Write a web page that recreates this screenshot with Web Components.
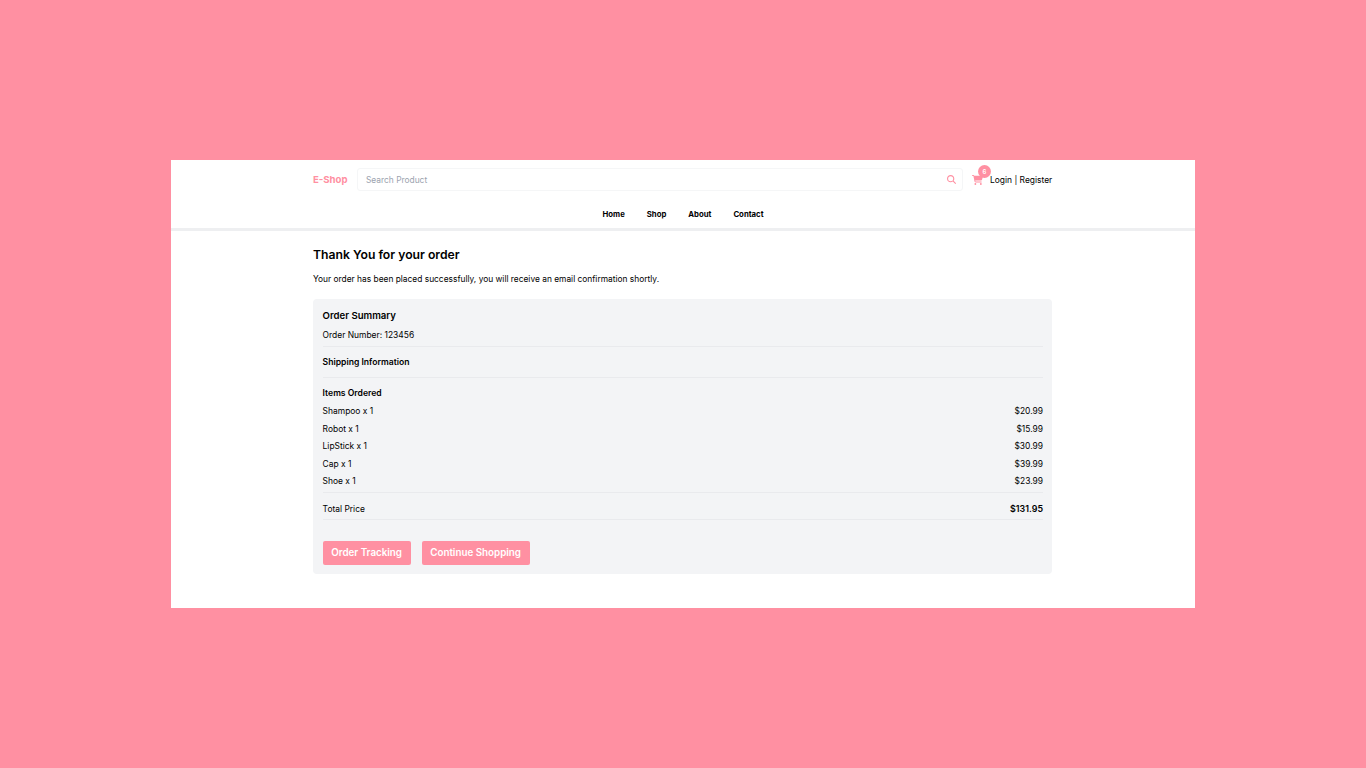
<!DOCTYPE html>
<html lang="en">
<head>
<meta charset="utf-8">
<title>E-Shop</title>
<style>
  html, body { margin: 0; height: 100%; }
  body {
    background: #ff90a2;
    font-family: Inter, "Liberation Sans", sans-serif;
    color: #000;
    display: flex;
    align-items: center;
    justify-content: center;
    height: 768px;
    overflow: hidden;
  }
</style>
</head>
<body>
<shop-page>
  <shop-header slot="header"></shop-header>
  <order-confirmation>
    <order-line label="Shampoo x 1" price="$20.99"></order-line>
    <order-line label="Robot x 1" price="$15.99"></order-line>
    <order-line label="LipStick x 1" price="$30.99"></order-line>
    <order-line label="Cap x 1" price="$39.99"></order-line>
    <order-line label="Shoe x 1" price="$23.99"></order-line>
  </order-confirmation>
</shop-page>

<script>
// white frame in the middle of the pink page
class ShopPage extends HTMLElement {
  constructor() {
    super();
    this.attachShadow({ mode: 'open' });
    this.shadowRoot.innerHTML = `
      <style>
        :host { display: block; width: 1024px; height: 448px; background: #fff; }
      </style>
      <slot name="header"></slot>
      <slot></slot>
    `;
  }
}

// logo, search, cart and the nav links
class ShopHeader extends HTMLElement {
  constructor() {
    super();
    this.attachShadow({ mode: 'open' });
    this.shadowRoot.innerHTML = `
      <style>
        :host { display: block; height: 68px; border-bottom: 3px solid #eeeff1; font-size: 8.45px; }
        .top {
          display: flex; align-items: center; height: 23px;
          margin: 0 143px 0 142px; padding-top: 8px;
        }
        .logo { font-size: 9.6px; font-weight: 700; color: #ff90a2; width: 44px; flex: none; }
        .search {
          flex: none; width: 606px; height: 23px; box-sizing: border-box;
          display: flex; align-items: center; justify-content: space-between;
          border: 1px solid #f5f6f7; border-radius: 3px; padding: 0 6px 0 8px;
          color: #9ca3af; font-size: 8.4px;
        }
        .search svg { display: block; }
        .cart { position: relative; flex: none; width: 27px; height: 23px; display: flex; align-items: center; padding-left: 9px; box-sizing: border-box; }
        .badge {
          position: absolute; left: 15px; top: -3.5px;
          width: 13px; height: 13px; border-radius: 50%;
          background: #ff90a2; color: #fff; font-size: 6px; font-weight: 600;
          display: flex; align-items: center; justify-content: center;
        }
        .account { white-space: nowrap; margin-left: auto; }
        nav {
          display: flex; justify-content: center; gap: 22px;
          margin-top: 15px; font-size: 7.75px; font-weight: 700; line-height: 16px;
        }
      </style>
      <div class="top">
        <div class="logo">E-Shop</div>
        <div class="search">
          <span>Search Product</span>
          <svg width="9" height="9" viewBox="0 0 512 512" fill="#ff90a2"><path d="M416 208c0 45.900-14.900 88.300-40 122.700L502.600 457.400c12.500 12.500 12.500 32.800 0 45.300s-32.800 12.500-45.300 0L330.700 376c-34.400 25.200-76.800 40-122.700 40C93.100 416 0 322.900 0 208S93.100 0 208 0S416 93.100 416 208zM208 352a144 144 0 1 0 0-288 144 144 0 1 0 0 288z"/></svg>
        </div>
        <div class="cart">
          <svg width="11" height="10" viewBox="0 0 576 512" fill="#ff90a2"><path d="M0 24C0 10.700 10.700 0 24 0H69.500c22 0 41.500 12.800 50.600 32h411c26.300 0 45.500 25 38.600 50.400l-41 152.300c-8.500 31.400-37 53.300-69.500 53.300H170.700l5.400 28.500c2.200 11.300 12.100 19.500 23.600 19.500H488c13.300 0 24 10.700 24 24s-10.700 24-24 24H199.700c-34.600 0-64.300-24.600-70.700-58.500L77.400 54.500c-.7-3.800-4-6.500-7.900-6.500H24C10.700 48 0 37.300 0 24zM128 464a48 48 0 1 1 96 0 48 48 0 1 1-96 0zm336-48a48 48 0 1 1 0 96 48 48 0 1 1 0-96z"/></svg>
          <span class="badge">6</span>
        </div>
        <div class="account">Login | Register</div>
      </div>
      <nav>
        <span>Home</span><span>Shop</span><span>About</span><span>Contact</span>
      </nav>
    `;
  }
}

// one row of the items list
class OrderLine extends HTMLElement {
  constructor() {
    super();
    this.attachShadow({ mode: 'open' });
  }

  connectedCallback() {
    const label = this.getAttribute('label') || '';
    const price = this.getAttribute('price') || '';
    this.shadowRoot.innerHTML = `
      <style>
        :host { display: flex; justify-content: space-between; height: 17.6px; line-height: 17.6px; font-size: 8.45px; }
      </style>
      <span>${label}</span><span>${price}</span>
    `;
  }
}

// heading, summary card and the two buttons
class OrderConfirmation extends HTMLElement {
  constructor() {
    super();
    this.attachShadow({ mode: 'open' });
    this.shadowRoot.innerHTML = `
      <style>
        :host { display: block; margin: 0 143px 0 142px; padding-top: 15px; font-size: 8.4px; }
        h1 { margin: 0; font-size: 12.2px; font-weight: 600; line-height: 18px; }
        p { margin: 8px 0 0; line-height: 14px; }
        .card {
          margin-top: 13px; height: 275px; box-sizing: border-box;
          background: #f3f4f6; border-radius: 4px; padding: 9px 9px 9px 9.6px;
        }
        h2 { margin: 0; font-size: 9.6px; font-weight: 600; line-height: 15px; }
        h3 { margin: 0; font-size: 8.6px; font-weight: 600; line-height: 14px; }
        .number { margin-top: 5px; line-height: 14px; font-size: 8.45px; }
        hr { border: 0; border-top: 1px solid #e9eaed; margin: 0; }
        .ship { margin-top: 8px; }
        .items { margin-top: 8px; margin-bottom: 3px; }
        .total { display: flex; justify-content: space-between; align-items: center; line-height: 14px; margin: 9px 0 3.5px; font-size: 8.45px; }
        .total b { font-weight: 600; font-size: 8.9px; }
        .actions { display: flex; gap: 11px; margin-top: 20.5px; }
        .btn {
          height: 24px; display: flex; align-items: center; justify-content: center;
          background: #ff90a2; color: #fff; border-radius: 2px;
          font-size: 9.8px; font-weight: 600;
        }
      </style>
      <h1>Thank You for your order</h1>
      <p>Your order has been placed successfully, you will receive an email confirmation shortly.</p>
      <div class="card">
        <h2>Order Summary</h2>
        <div class="number">Order Number: 123456</div>
        <hr style="margin-top:4px">
        <h3 class="ship">Shipping Information</h3>
        <hr style="margin-top:8px">
        <h3 class="items">Items Ordered</h3>
        <slot></slot>
        <hr style="margin-top:1px">
        <div class="total"><span>Total Price</span><b>$131.95</b></div>
        <hr>
        <div class="actions">
          <div class="btn" style="width:88px">Order Tracking</div>
          <div class="btn" style="width:108px">Continue Shopping</div>
        </div>
      </div>
    `;
  }
}

customElements.define('shop-page', ShopPage);
customElements.define('shop-header', ShopHeader);
customElements.define('order-line', OrderLine);
customElements.define('order-confirmation', OrderConfirmation);
</script>
</body>
</html>
